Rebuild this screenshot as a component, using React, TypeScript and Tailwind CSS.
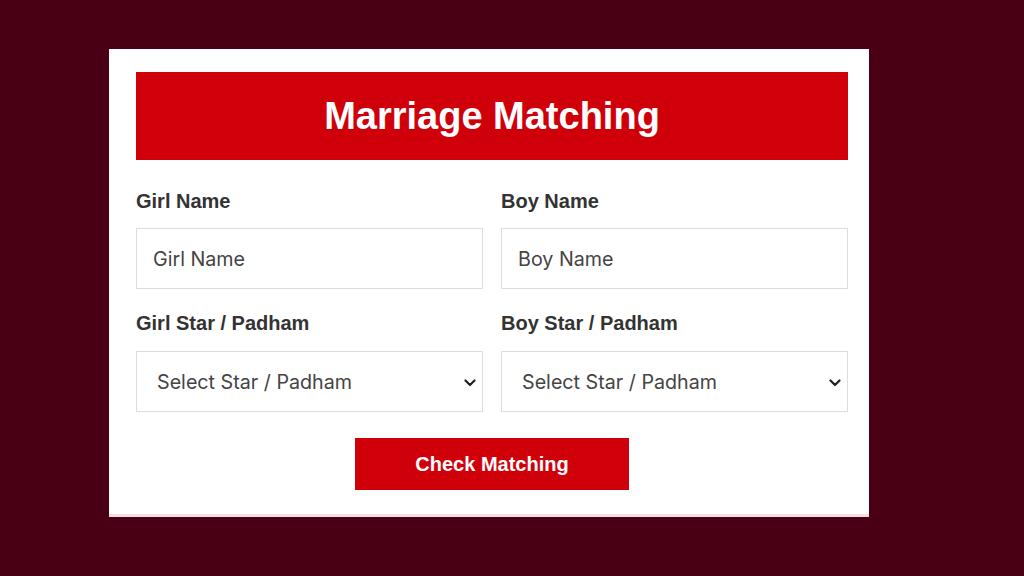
export default function App() {
  const chevron = (
    <svg viewBox="0 0 12 8" className="w-[12px] h-[8px]" fill="none" stroke="#222" strokeWidth="2.2" strokeLinecap="round" strokeLinejoin="round">
      <path d="M1.5 1.5 L6 6 L10.5 1.5" />
    </svg>
  );
  const label = "text-[20px] font-bold text-[#333] leading-none font-['Liberation_Sans',Arial,sans-serif]";
  const box = "h-[61px] border border-[#dcdcdc] bg-white flex items-center pt-[2px] text-[19.7px] text-[#444] font-['Inter',sans-serif]";
  return (
    <div className="w-[1024px] h-[576px] bg-[#4a0014] pt-[49px] pl-[109px]">
      <div className="w-[760px] h-[468px] bg-white border-b-[3px] border-[#f3dfe3] pl-[27px] pr-[21px] pt-[23px]">
        <div className="h-[88px] bg-[#d0000b] flex items-center justify-center">
          <h1 className="text-[38px] font-bold text-white font-['Liberation_Sans',Arial,sans-serif] leading-none">Marriage Matching</h1>
        </div>
        <div className="grid grid-cols-2 gap-x-[18px] mt-[31px]">
          <div>
            <div className={label}>Girl Name</div>
            <div className={`${box} mt-[17px] pl-[16px]`}>Girl Name</div>
          </div>
          <div>
            <div className={label}>Boy Name</div>
            <div className={`${box} mt-[17px] pl-[16px]`}>Boy Name</div>
          </div>
          <div className="mt-[24px]">
            <div className={label}>Girl Star / Padham</div>
            <div className={`${box} mt-[18px] pl-[20px] pr-[6px] justify-between`}>
              <span>Select Star / Padham</span>
              {chevron}
            </div>
          </div>
          <div className="mt-[24px]">
            <div className={label}>Boy Star / Padham</div>
            <div className={`${box} mt-[18px] pl-[20px] pr-[6px] justify-between`}>
              <span>Select Star / Padham</span>
              {chevron}
            </div>
          </div>
        </div>
        <div className="flex justify-center mt-[26px]">
          <button className="w-[274px] h-[52px] bg-[#d0000b] text-white text-[20px] font-bold font-['Liberation_Sans',Arial,sans-serif]">
            Check Matching
          </button>
        </div>
      </div>
    </div>
  );
}
